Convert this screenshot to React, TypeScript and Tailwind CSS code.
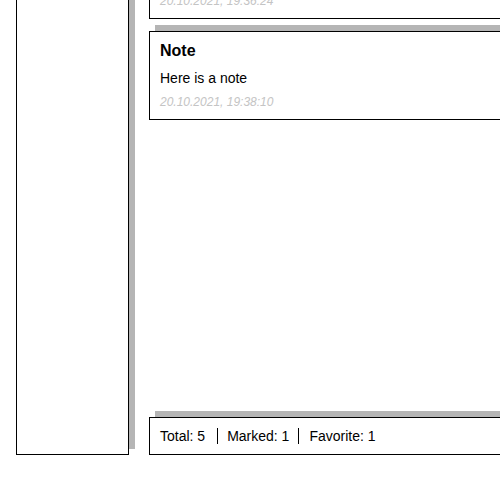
import React from "react";

type Note = {
  title: string;
  text: string;
  date: string;
};

const notes: Note[] = [
  { title: "Note", text: "Here is a note", date: "20.10.2021, 19:36:24" },
  { title: "Note", text: "Here is a note", date: "20.10.2021, 19:38:10" },
];

const shadow = "shadow-[6px_-6px_0_0_#b5b5b5]";

export default function App() {
  return (
    <div
      className="h-screen w-full overflow-hidden bg-white text-black"
      style={{ fontFamily: '"Liberation Sans", Arial, sans-serif' }}
    >
      <div className="-mt-[70px] flex h-[525px] gap-5 pl-4">
        {/* Sidebar */}
        <aside className={`w-[113px] flex-none border border-black bg-white ${shadow}`} />

        {/* Notes column */}
        <main className="flex w-[560px] flex-none flex-col">
          <div className="flex flex-1 flex-col gap-3">
            {notes.map((note, i) => (
              <NoteCard key={i} note={note} />
            ))}
          </div>

          {/* Footer stats */}
          <div className={`flex items-center border border-black bg-white py-[10px] pl-[10px] text-[14px] leading-4 ${shadow}`}>
            <span className="border-r border-black pr-[12px]">Total: 5</span>
            <span className="border-r border-black pl-[9px] pr-[9px]">Marked: 1</span>
            <span className="pl-[10px]">Favorite: 1</span>
          </div>
        </main>
      </div>
    </div>
  );
}

function NoteCard({ note }: { note: Note }) {
  return (
    <div className={`border border-black bg-white px-[10px] pt-[10px] pb-[10px] ${shadow}`}>
      <h3 className="text-[16px] font-bold leading-[18px]">{note.title}</h3>
      <p className="mt-[10px] text-[14px] leading-4">{note.text}</p>
      <p className="mt-[9px] text-[12px] italic leading-[14px] text-[#c4c4c4]">{note.date}</p>
    </div>
  );
}
